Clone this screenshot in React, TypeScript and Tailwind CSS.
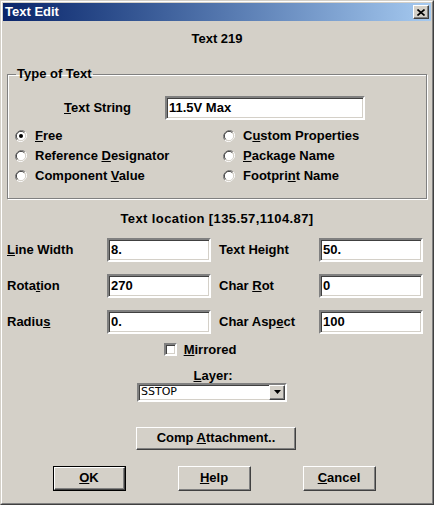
import React from "react";

const font = "font-['Liberation_Sans',Arial,sans-serif]";

const sunken =
  "border-2 border-t-[#808080] border-l-[#808080] border-b-white border-r-white shadow-[inset_1px_1px_0_#404040,inset_-1px_-1px_0_#d4d0c8] bg-white";

const raised =
  "border border-t-white border-l-white border-b-[#404040] border-r-[#404040] shadow-[inset_-1px_-1px_0_#808080,inset_1px_1px_0_#d4d0c8] bg-[#d4d0c8]";

function Radio({ checked }: { checked?: boolean }) {
  return (
    <svg width="12" height="12" viewBox="0 0 12 12" className="shrink-0">
      <path d="M10.2 1.8 A6 6 0 0 0 1.8 10.2" fill="none" stroke="#808080" strokeWidth="1" />
      <path d="M1.8 10.2 A6 6 0 0 0 10.2 1.8" fill="none" stroke="#ffffff" strokeWidth="1" />
      <circle cx="6" cy="6" r="4.6" fill="#fff" />
      <path d="M9.3 2.7 A4.6 4.6 0 0 0 2.7 9.3" fill="none" stroke="#404040" strokeWidth="1" />
      <path d="M2.7 9.3 A4.6 4.6 0 0 0 9.3 2.7" fill="none" stroke="#d4d0c8" strokeWidth="1" />
      {checked && <circle cx="6" cy="6" r="2" fill="#000" />}
    </svg>
  );
}

function RadioRow({ checked, children }: { checked?: boolean; children: React.ReactNode }) {
  return (
    <div className="flex h-[20px] items-center gap-[8px]">
      <Radio checked={checked} />
      <span>{children}</span>
    </div>
  );
}

function Field({ value, className = "" }: { value: string; className?: string }) {
  return (
    <div className={`${sunken} flex h-[24px] items-center px-[2px] ${className}`}>
      {value}
    </div>
  );
}

function Button({ children, def, className = "" }: { children: React.ReactNode; def?: boolean; className?: string }) {
  const inner = (
    <div className={`${raised} flex h-full w-full items-center justify-center`}>{children}</div>
  );
  if (def) {
    return <div className={`border border-black ${className}`}>{inner}</div>;
  }
  return <div className={className}>{inner}</div>;
}

function LabeledField({ label, value }: { label: React.ReactNode; value: string }) {
  return (
    <div className="flex items-center">
      <span className="w-[100px]">{label}</span>
      <Field value={value} className="w-[104px]" />
    </div>
  );
}

export default function App() {
  return (
    <div className={`${font} h-[505px] w-[434px] bg-[#d4d0c8] text-[13px] font-bold text-black`}>
      <div className="flex h-full w-full flex-col border border-t-[#d4d0c8] border-l-[#d4d0c8] border-b-[#404040] border-r-[#404040]">
        <div className="flex h-full flex-col border border-t-white border-l-white border-b-[#808080] border-r-[#808080] p-[1px]">
          {/* title bar */}
          <div className="flex h-[18px] items-center justify-between bg-gradient-to-r from-[#0a246a] to-[#a6caf0] pl-[2px] pr-[2px]">
            <span className="text-white">Text Edit</span>
            <div className={`${raised} flex h-[14px] w-[16px] items-center justify-center`}>
              <svg width="8" height="7" viewBox="0 0 8 7">
                <path d="M0.5 0.5 L7.5 6.5 M7.5 0.5 L0.5 6.5" stroke="#000" strokeWidth="1.6" />
              </svg>
            </div>
          </div>

          <div className="mt-[10px] text-center leading-[16px]">Text 219</div>

          {/* group box */}
          <fieldset className="mx-[4px] mt-[20px] h-[132px] border border-[#808080] px-[7px] shadow-[inset_1px_1px_0_white,1px_1px_0_white]">
            <legend className="ml-[1px] px-[1px] leading-[14px]">Type of Text</legend>
            <div className="mt-[15px] flex items-center">
              <div className="w-[150px] pl-[49px]">
                <u>T</u>ext String
              </div>
              <Field value="11.5V Max" className="w-[200px]" />
            </div>
            <div className="mt-[6px] grid grid-cols-2">
              <div>
                <RadioRow checked>
                  <u>F</u>ree
                </RadioRow>
                <RadioRow>
                  Reference <u>D</u>esignator
                </RadioRow>
                <RadioRow>
                  Component <u>V</u>alue
                </RadioRow>
              </div>
              <div className="pl-[6px]">
                <RadioRow>
                  C<u>u</u>stom Properties
                </RadioRow>
                <RadioRow>
                  <u>P</u>ackage Name
                </RadioRow>
                <RadioRow>
                  Footpri<u>n</u>t Name
                </RadioRow>
              </div>
            </div>
          </fieldset>

          <div className="mt-[12px] text-center leading-[16px] tracking-[0.4px]">
            Text location [135.57,1104.87]
          </div>

          <div className="mt-[11px] flex flex-col gap-y-[12px] pl-[4px]">
            <div className="flex gap-[8px]">
              <LabeledField label={<><u>L</u>ine Width</>} value="8." />
              <LabeledField label="Text Height" value="50." />
            </div>
            <div className="flex gap-[8px]">
              <LabeledField label={<>Rota<u>t</u>ion</>} value="270" />
              <LabeledField label={<>Char <u>R</u>ot</>} value="0" />
            </div>
            <div className="flex gap-[8px]">
              <LabeledField label={<>Radiu<u>s</u></>} value="0." />
              <LabeledField label={<>Char Asp<u>e</u>ct</>} value="100" />
            </div>
          </div>

          <div className="mt-[6px] flex items-center justify-center gap-[7px] pr-[34px]">
            <div className={`${sunken} h-[13px] w-[13px]`} />
            <span>
              <u>M</u>irrored
            </span>
          </div>

          <div className="mt-[9px] pr-[8px] text-center leading-[14px]">
            <u>L</u>ayer:
          </div>

          <div className="mt-[0px] flex justify-center pr-[10px]">
            <div className={`${sunken} flex h-[19px] w-[150px] items-center justify-between`}>
              <span className="pl-[2px] font-['DejaVu_Sans',sans-serif] text-[11px] font-normal">SSTOP</span>
              <div className={`${raised} flex h-[15px] w-[16px] items-center justify-center`}>
                <svg width="7" height="4" viewBox="0 0 7 4">
                  <path d="M0 0 H7 L3.5 4 Z" fill="#000" />
                </svg>
              </div>
            </div>
          </div>

          <div className="mt-[25px] flex justify-center pr-[2px]">
            <Button className="h-[23px] w-[160px]">
              <span>
                Comp <u>A</u>ttachment..
              </span>
            </Button>
          </div>

          <div className="mt-[16px] flex justify-center gap-[52px] pr-[6px]">
            <Button def className="h-[25px] w-[73px]">
              <span>
                <u>O</u>K
              </span>
            </Button>
            <Button className="h-[25px] w-[73px]">
              <span>
                <u>H</u>elp
              </span>
            </Button>
            <Button className="h-[25px] w-[73px]">
              <span>
                <u>C</u>ancel
              </span>
            </Button>
          </div>
        </div>
      </div>
    </div>
  );
}
